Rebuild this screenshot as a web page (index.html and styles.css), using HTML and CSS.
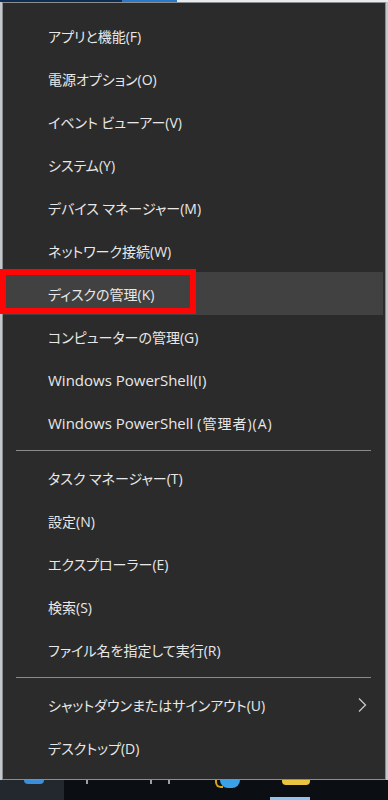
FILE: index.html
```html
<!DOCTYPE html>
<html lang="ja">
<head>
    <meta charset="UTF-8">
    <title>Win+X メニュー</title>
    <link rel="stylesheet" href="styles.css">
</head>
<body>

<div class="topstrip">
    <span class="ts-dark"></span>
    <span class="ts-blue"></span>
    <span class="ts-light"></span>
</div>

<div class="menu">
    <div class="item">アプリと機能(F)</div>
    <div class="item">電源オプション(O)</div>
    <div class="item">イベント ビューアー(V)</div>
    <div class="item">システム(Y)</div>
    <div class="item">デバイス マネージャー(M)</div>
    <div class="item">ネットワーク接続(W)</div>
    <div class="item active">ディスクの管理(K)<span class="mark"></span></div>
    <div class="item">コンピューターの管理(G)</div>
    <div class="item"><span class="en">Windows PowerShell(I)</span></div>
    <div class="item"><span class="en">Windows PowerShell </span><span class="wide">(管理者)(A)</span></div>
    <div class="sep"></div>
    <div class="item">タスク マネージャー(T)</div>
    <div class="item">設定(N)</div>
    <div class="item">エクスプローラー(E)</div>
    <div class="item">検索(S)</div>
    <div class="item">ファイル名を指定して実行(R)</div>
    <div class="sep"></div>
    <div class="item sub">
        <span>シャットダウンまたはサインアウト(U)</span>
        <svg class="chev" width="10" height="16" viewBox="0 0 10 16">
            <polyline points="2,1.5 8.5,8 2,14.5" fill="none" stroke="#c8c8c8" stroke-width="1.3"/>
        </svg>
    </div>
    <div class="item">デスクトップ(D)</div>
</div>

<div class="taskbar">
    <div class="tb-start"><span class="ic ic-blue"></span></div>
    <div class="tb-rest">
        <span class="ic ic-tick t1"></span>
        <span class="ic ic-tick t2"></span>
        <span class="ic ic-tick t3"></span>
        <span class="ic ic-moon"></span>
        <span class="ic ic-ball"></span>
        <span class="ic ic-yellow"></span>
        <span class="ic ic-pane"></span>
    </div>
</div>

</body>
</html>
```

FILE: styles.css
```css
html, body {
    margin: 0;
    height: 800px;
    overflow: hidden;
}
body {
    background-color: #c3c8cf;
    font-family: "Open Sans", "Noto Sans CJK JP", sans-serif;
    padding: 0 2px 0 2px;
    box-sizing: border-box;
    position: relative;
}
.topstrip {
    display: flex;
    height: 2px;
    margin: 0 -2px;
}
.ts-dark { width: 122px; background-color: #0d2d52; }
.ts-blue { width: 55px; background-color: #2a78c8; }
.ts-light { flex: 1; background-color: #e9ecef; }

.menu {
    width: 384px;
    height: 778px;
    box-sizing: border-box;
    background-color: #2b2b2b;
    border: 1px solid #8d8d8d;
    padding-top: 11px;
    padding-right: 2px;
}
.item {
    height: 43px;
    display: flex;
    align-items: center;
    padding-left: 45px;
    color: #e8e8e8;
    font-size: 14px;
    font-feature-settings: "palt";
    position: relative;
    white-space: pre;
}
.en {
    font-size: 15px;
}
.wide {
    letter-spacing: 1px;
}
.item.active {
    background-color: #414141;
}
.mark {
    position: absolute;
    left: -3px;
    top: -3px;
    width: 196px;
    height: 45px;
    box-sizing: border-box;
    border: 6px solid #ff0606;
}
.sep {
    height: 12px;
    display: flex;
    align-items: center;
    padding: 0 12px 0 13px;
}
.sep::before {
    content: "";
    flex: 1;
    height: 1px;
    background-color: #8a8a8a;
}
.sub {
    justify-content: space-between;
    padding-right: 16px;
}
.chev {
    display: block;
}

.taskbar {
    display: flex;
    height: 20px;
    margin: 0 -2px;
}
.tb-start {
    width: 64px;
    background-color: #23272e;
    position: relative;
}
.tb-rest {
    flex: 1;
    background-color: #0b0e13;
    position: relative;
}
.ic {
    position: absolute;
    display: block;
}
.ic-blue {
    left: 24px; top: 0; width: 20px; height: 4px;
    background-color: #3a8fd8;
    border-radius: 0 0 8px 8px;
}
.ic-tick { top: 0; width: 2px; height: 4px; background-color: #9aa0a8; }
.t1 { left: 22px; }
.t2 { left: 86px; }
.t3 { left: 104px; }
.ic-moon {
    left: 151px; top: 0; width: 6px; height: 6px;
    border-left: 2px solid #d9a520;
    border-bottom: 2px solid #d9a520;
    border-radius: 0 0 0 6px;
}
.ic-ball {
    left: 156px; top: 0; width: 20px; height: 8px;
    background-color: #3aa2e8;
    border-radius: 0 0 10px 10px;
}
.ic-yellow {
    left: 218px; top: 0; width: 28px; height: 5px;
    background-color: #e8c440;
    border-radius: 0 0 4px 4px;
}
.ic-pane {
    left: 206px; top: 17px; width: 40px; height: 3px;
    background-color: #8ec4ee;
}
```
